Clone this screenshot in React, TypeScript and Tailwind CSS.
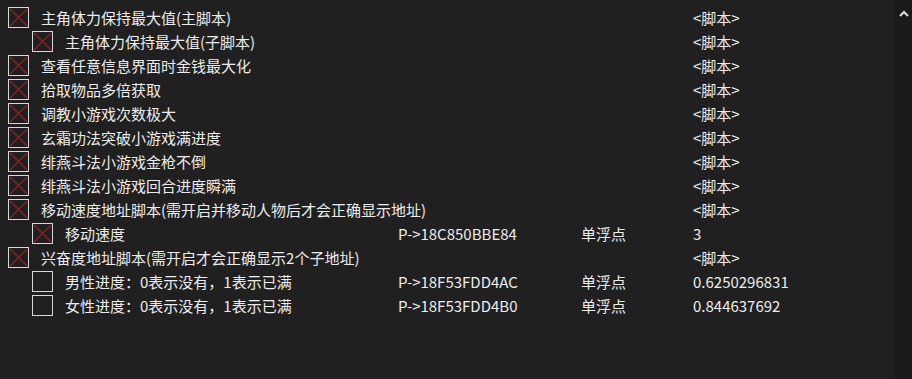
import React from "react";

type Row = {
  indent: number;
  checked: boolean;
  name: string;
  addr?: string;
  type?: string;
  value: string;
};

const rows: Row[] = [
  { indent: 0, checked: true, name: "主角体力保持最大值(主脚本)", value: "<脚本>" },
  { indent: 1, checked: true, name: "主角体力保持最大值(子脚本)", value: "<脚本>" },
  { indent: 0, checked: true, name: "查看任意信息界面时金钱最大化", value: "<脚本>" },
  { indent: 0, checked: true, name: "拾取物品多倍获取", value: "<脚本>" },
  { indent: 0, checked: true, name: "调教小游戏次数极大", value: "<脚本>" },
  { indent: 0, checked: true, name: "玄霜功法突破小游戏满进度", value: "<脚本>" },
  { indent: 0, checked: true, name: "绯燕斗法小游戏金枪不倒", value: "<脚本>" },
  { indent: 0, checked: true, name: "绯燕斗法小游戏回合进度瞬满", value: "<脚本>" },
  { indent: 0, checked: true, name: "移动速度地址脚本(需开启并移动人物后才会正确显示地址)", value: "<脚本>" },
  { indent: 1, checked: true, name: "移动速度", addr: "P->18C850BBE84", type: "单浮点", value: "3" },
  { indent: 0, checked: true, name: "兴奋度地址脚本(需开启才会正确显示2个子地址)", value: "<脚本>" },
  { indent: 1, checked: false, name: "男性进度：0表示没有，1表示已满", addr: "P->18F53FDD4AC", type: "单浮点", value: "0.6250296831" },
  { indent: 1, checked: false, name: "女性进度：0表示没有，1表示已满", addr: "P->18F53FDD4B0", type: "单浮点", value: "0.844637692" },
];

function Box({ checked }: { checked: boolean }) {
  return (
    <div className="w-[21px] h-[21px] shrink-0 border border-[#d8d8d8] bg-[#202020] relative">
      {checked && (
        <svg width="19" height="19" viewBox="0 0 19 19" className="absolute left-0 top-0">
          <line x1="1" y1="1" x2="18" y2="18" stroke="#9a1c1c" strokeWidth="1.3" />
          <line x1="18" y1="1" x2="1" y2="18" stroke="#9a1c1c" strokeWidth="1.3" />
        </svg>
      )}
    </div>
  );
}

export default function App() {
  return (
    <div
      className="w-[912px] h-[379px] bg-[#202020] flex text-[#ececec] text-[15px] overflow-hidden"
      style={{ fontFamily: '"Noto Sans CJK SC", "Noto Sans", sans-serif' }}
    >
      <div className="flex-1 pt-[5px]">
        {rows.map((r, i) => (
          <div key={i} className="h-[24px] flex items-center whitespace-nowrap">
            <div className={`w-[398px] flex items-center gap-[12px] ${r.indent ? "pl-[32px]" : "pl-[8px]"}`}>
              <Box checked={r.checked} />
              <span className="leading-none">{r.name}</span>
            </div>
            <div className="w-[183px] leading-none">{r.addr ?? ""}</div>
            <div className="w-[112px] leading-none">{r.type ?? ""}</div>
            <div className="leading-none">{r.value}</div>
          </div>
        ))}
      </div>
      <div className="w-[17px] bg-[#1a1a1a] flex justify-center pt-[10px]">
        <svg width="10" height="7" viewBox="0 0 10 7">
          <path d="M1 6 L5 2 L9 6" stroke="#dcdcdc" strokeWidth="2" fill="none" />
        </svg>
      </div>
    </div>
  );
}
